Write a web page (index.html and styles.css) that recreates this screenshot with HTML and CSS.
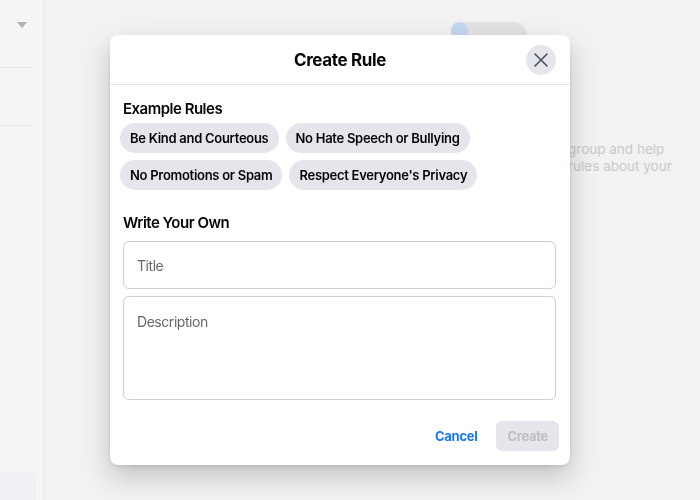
FILE: index.html
```html
<!DOCTYPE html>
<html>
<head>
	<meta charset="utf-8">
	<title>Create Rule</title>
	<link rel="stylesheet" href="styles.css">
</head>
<body>

<div class='page'>
	<aside class='sidebar'>
		<div class='sidebar-top'><span class='caret'></span></div>
		<div class='sidebar-row'></div>
		<div class='sidebar-fill'></div>
		<div class='sidebar-active'></div>
	</aside>

	<main class='content'>
		<div class='chip-bg'><span class='avatar'></span></div>
		<p class='bg-text'>group and help<br>rules about your</p>
	</main>
</div>

<div class='overlay'>
	<div class='modal'>
		<div class='modal-header'>
			<h2>Create Rule</h2>
			<button class='close' aria-label='Close'>
				<svg width='16' height='16' viewBox='0 0 16 16'>
					<path d='M2 2 L14 14 M14 2 L2 14' stroke='#4b4f56' stroke-width='1.6' stroke-linecap='round'/>
				</svg>
			</button>
		</div>

		<div class='modal-body'>
			<h3>Example Rules</h3>
			<div class='rules'>
				<span class='rule'>Be Kind and Courteous</span>
				<span class='rule'>No Hate Speech or Bullying</span>
				<span class='rule'>No Promotions or Spam</span>
				<span class='rule'>Respect Everyone's Privacy</span>
			</div>

			<h3 class='own'>Write Your Own</h3>
			<div class='field'>Title</div>
			<div class='field area'>Description</div>
		</div>

		<div class='modal-footer'>
			<button class='btn cancel'>Cancel</button>
			<button class='btn create'>Create</button>
		</div>
	</div>
</div>

</body>
</html>
```

FILE: styles.css
```css
html, body {
	margin: 0;
	padding: 0;
	height: 100%;
	overflow: hidden;
}

body {
	font-family: 'Inter', 'Liberation Sans', sans-serif;
	background: #f2f2f2;
	color: #050505;
}

.page {
	display: flex;
	height: 500px;
}

.sidebar {
	width: 43px;
	background: #f5f5f5;
	border-right: 1px solid #e9e9e9;
	display: flex;
	flex-direction: column;
}

.sidebar-top {
	height: 68px;
	margin-right: 10px;
	border-bottom: 1px solid #e6e6e6;
	box-sizing: border-box;
	padding: 22px 0 0 17px;
}

.caret {
	display: block;
	width: 0;
	height: 0;
	border-left: 5px solid transparent;
	border-right: 5px solid transparent;
	border-top: 6px solid #b0b0b0;
}

.sidebar-row {
	height: 58px;
	margin-right: 10px;
	border-bottom: 1px solid #e6e6e6;
	box-sizing: border-box;
}

.sidebar-fill {
	flex: 1;
}

.sidebar-active {
	height: 28px;
	width: 36px;
	background: #eef0f4;
	border-top-right-radius: 6px;
}

.content {
	flex: 1;
	padding: 22px 0 0 407px;
}

.chip-bg {
	width: 76px;
	height: 28px;
	border-radius: 14px;
	background: #e2e2e2;
	position: relative;
}

.avatar {
	position: absolute;
	left: 0;
	top: 0;
	width: 17px;
	height: 17px;
	border-radius: 50%;
	background: #c4d6f0;
}

.bg-text {
	margin: 91px 0 0 117px;
	font-size: 13.5px;
	line-height: 17px;
	color: #c9c9c9;
	white-space: nowrap;
}

.overlay {
	position: fixed;
	top: 0;
	left: 0;
	right: 0;
	bottom: 0;
	padding: 35px 0 0 110px;
}

.modal {
	width: 460px;
	background: #fff;
	border-radius: 8px;
	box-shadow: 0 12px 28px 0 rgba(0, 0, 0, 0.2), 0 2px 4px 0 rgba(0, 0, 0, 0.1);
}

.modal-header {
	height: 49px;
	border-bottom: 1px solid #e5e5e5;
	display: flex;
	align-items: center;
	justify-content: center;
	position: relative;
}

.modal-header h2 {
	margin: 0;
	font-size: 17px;
	font-weight: 700;
	letter-spacing: -0.35px;
}

.close {
	position: absolute;
	right: 14px;
	top: 10px;
	width: 30px;
	height: 30px;
	border: 0;
	border-radius: 50%;
	background: #e4e6eb;
	padding: 0;
	display: flex;
	align-items: center;
	justify-content: center;
}

.modal-body {
	padding: 14px 14px 0 13px;
}

h3 {
	margin: 0;
	font-size: 15px;
	font-weight: 600;
	line-height: 20px;
	letter-spacing: -0.5px;
}

.rules {
	display: flex;
	flex-wrap: wrap;
	gap: 7px;
	margin: 4px 0 0 -3px;
}

.rule {
	height: 30px;
	line-height: 30px;
	padding: 0 10px;
	border-radius: 15px;
	background: #e4e6eb;
	font-size: 13px;
	font-weight: 600;
	letter-spacing: -0.28px;
	white-space: nowrap;
}

h3.own {
	margin-top: 23px;
}

.field {
	margin-top: 8px;
	height: 48px;
	box-sizing: border-box;
	border: 1px solid #ccd0d5;
	border-radius: 6px;
	padding: 0 13px;
	display: flex;
	align-items: center;
	font-size: 14px;
	letter-spacing: -0.45px;
	color: #65676b;
}

.field.area {
	margin-top: 7px;
	height: 104px;
	align-items: flex-start;
	padding-top: 16px;
}

.modal-footer {
	display: flex;
	justify-content: flex-end;
	gap: 8px;
	padding: 21px 11px 14px 0;
}

.btn {
	height: 30px;
	border: 0;
	border-radius: 6px;
	font-family: inherit;
	font-size: 13px;
	font-weight: 700;
	letter-spacing: -0.3px;
	padding: 0 11px;
	background: none;
}

.cancel {
	color: #1877f2;
}

.create {
	background: #e4e6eb;
	color: #bcc0c4;
}
```
